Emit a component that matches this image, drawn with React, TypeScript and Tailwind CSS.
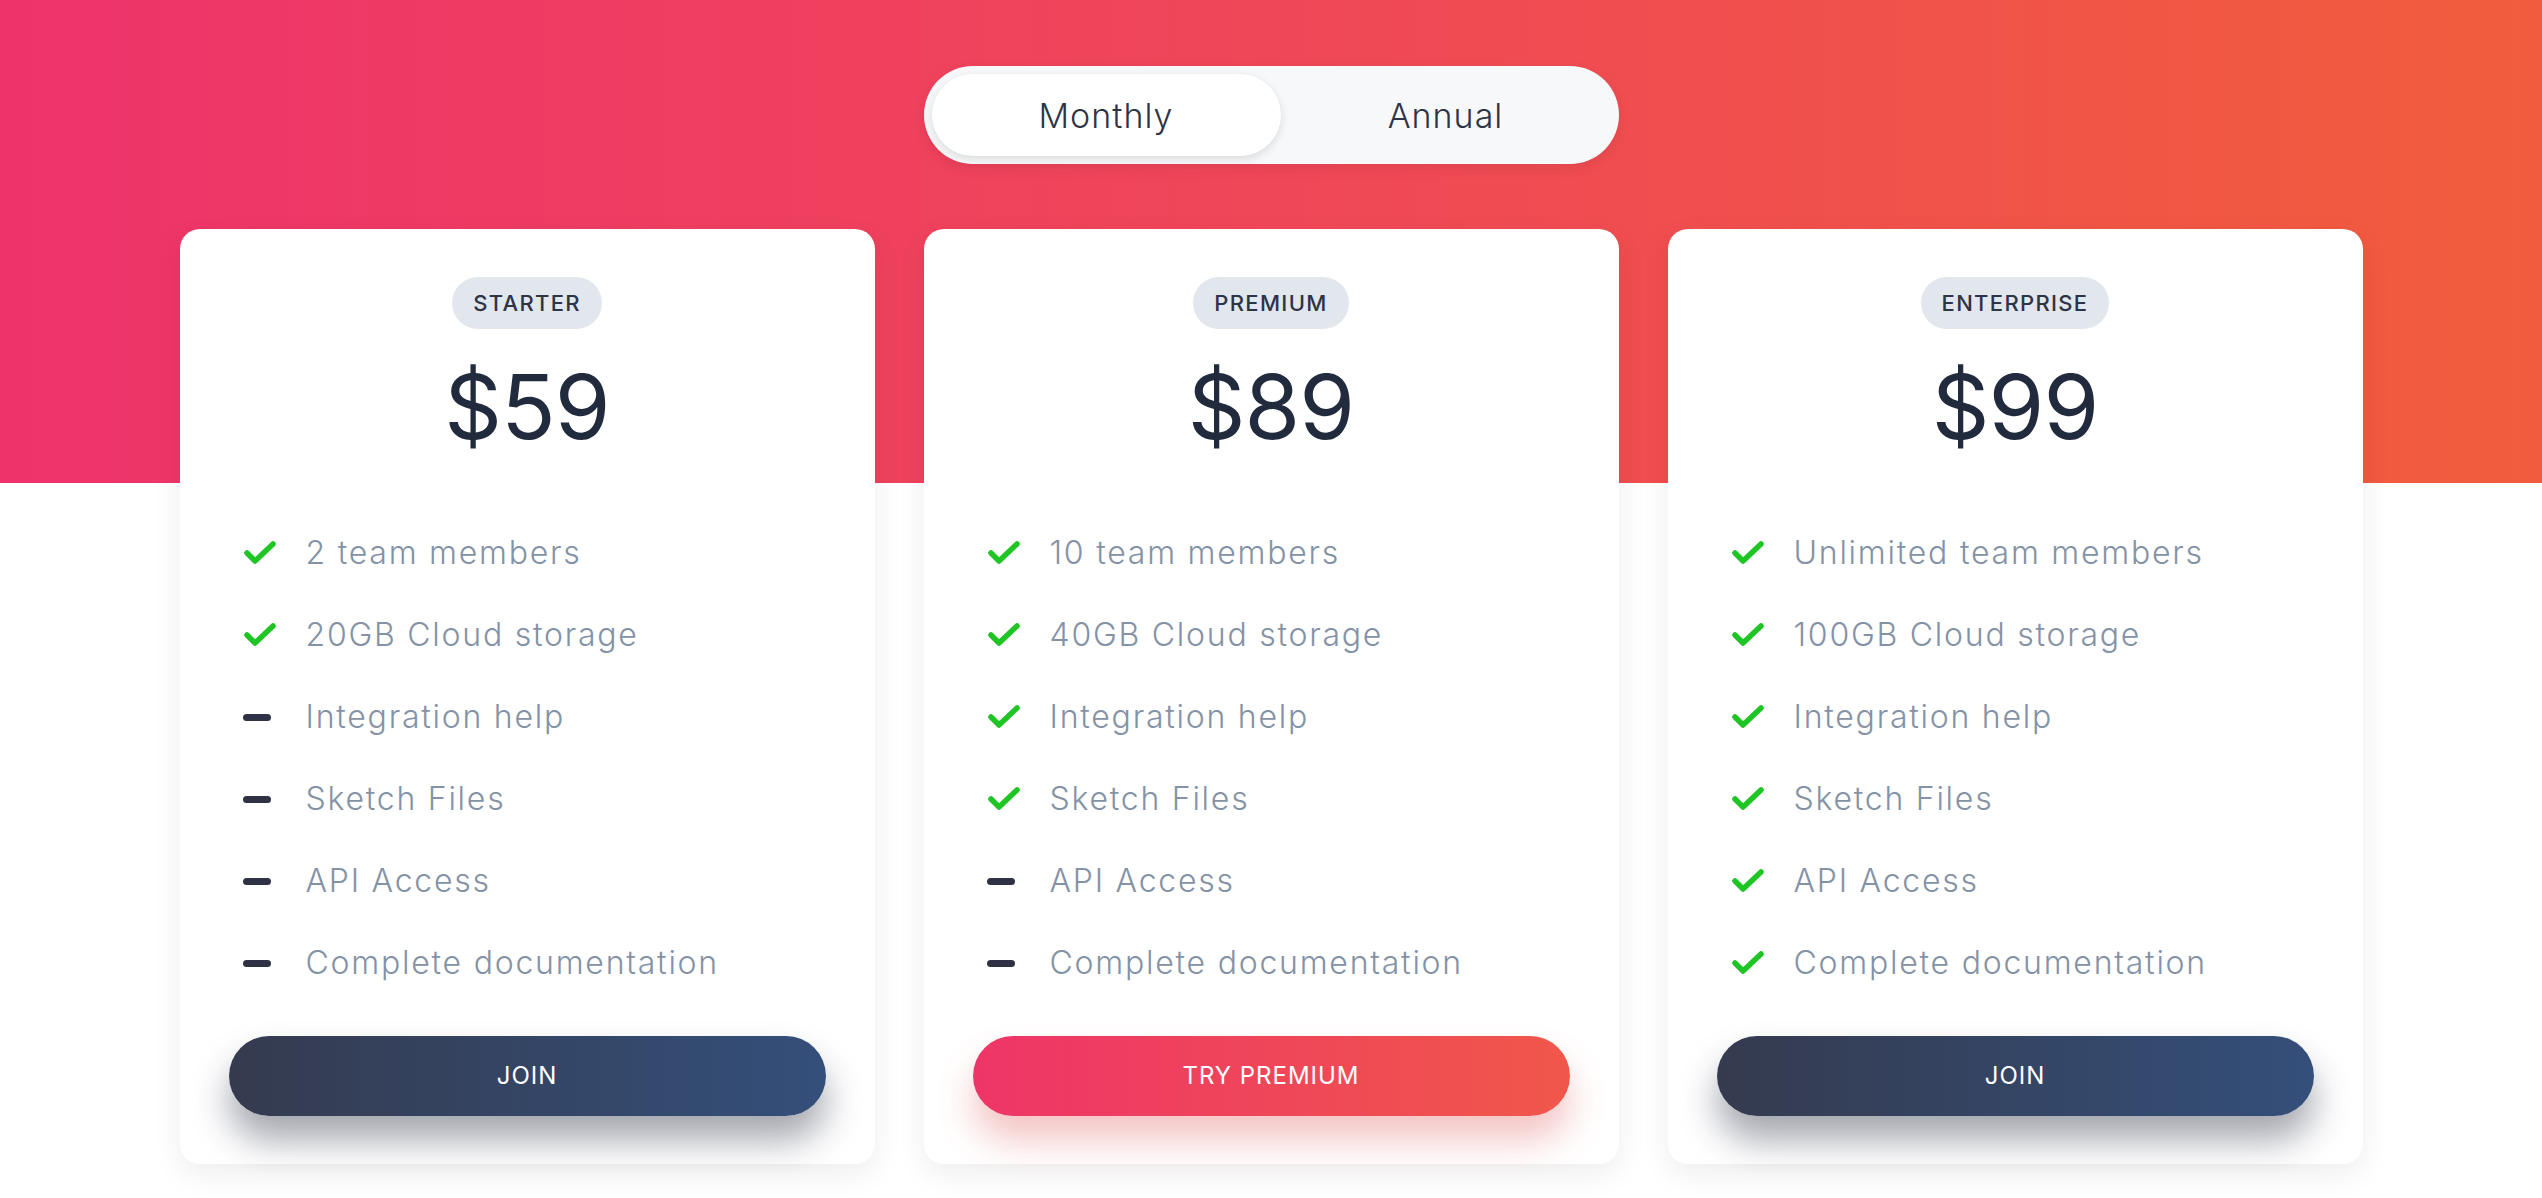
const plans = [
  {
    name: "STARTER",
    price: "$59",
    cta: "JOIN",
    premium: false,
    features: [
      ["2 team members", true],
      ["20GB Cloud storage", true],
      ["Integration help", false],
      ["Sketch Files", false],
      ["API Access", false],
      ["Complete documentation", false],
    ] as [string, boolean][],
  },
  {
    name: "PREMIUM",
    price: "$89",
    cta: "TRY PREMIUM",
    premium: true,
    features: [
      ["10 team members", true],
      ["40GB Cloud storage", true],
      ["Integration help", true],
      ["Sketch Files", true],
      ["API Access", false],
      ["Complete documentation", false],
    ] as [string, boolean][],
  },
  {
    name: "ENTERPRISE",
    price: "$99",
    cta: "JOIN",
    premium: false,
    features: [
      ["Unlimited team members", true],
      ["100GB Cloud storage", true],
      ["Integration help", true],
      ["Sketch Files", true],
      ["API Access", true],
      ["Complete documentation", true],
    ] as [string, boolean][],
  },
];

function Check() {
  return (
    <svg width="34" height="26" viewBox="0 0 34 26" fill="none">
      <polyline
        points="4,13 12,21 30,4"
        stroke="#1fc524"
        strokeWidth="5.5"
        strokeLinecap="round"
        strokeLinejoin="round"
      />
    </svg>
  );
}

function Dash() {
  return <span className="block h-[7px] w-[28px] rounded-full bg-[#2e3244]" />;
}

export default function App() {
  return (
    <div
      className="min-h-[1198px] w-full bg-white bg-[linear-gradient(90deg,#ee336b,#f04758_50%,#f15d3c)] bg-no-repeat bg-[length:100%_483px] pt-[66px]"
      style={{ fontFamily: "Inter, 'Open Sans', sans-serif" }}
    >
      {/* Billing toggle */}
      <div className="mx-auto flex h-[98px] w-[695px] items-center rounded-full bg-[#f7f8fa] p-[8px] shadow-[0_4px_14px_rgba(0,0,0,0.08)]">
        <button className="flex h-full w-[349px] items-center justify-center rounded-full bg-white text-[34px] font-light tracking-[0.03em] text-[#2d3446] shadow-[0_3px_10px_rgba(0,0,0,0.12)]">
          Monthly
        </button>
        <button className="flex h-full flex-1 items-center justify-center text-[34px] font-light tracking-[0.03em] text-[#2d3446]">
          Annual
        </button>
      </div>

      {/* Plans */}
      <div className="mx-auto mt-[65px] grid w-[2183px] grid-cols-3 gap-[49px]">
        {plans.map((p) => (
          <div
            key={p.name}
            className="flex flex-col items-center rounded-[20px] bg-white px-[49px] pb-[48px] pt-[48px] shadow-[0_10px_30px_rgba(0,0,0,0.07)]"
          >
            <span className="flex h-[52px] items-center rounded-full bg-[#e2e6ed] px-[21px] text-[22px] font-medium tracking-[0.06em] text-[#2d3446]">
              {p.name}
            </span>
            <div className="mt-[33px] text-[90px] font-normal leading-none tracking-[-0.01em] text-[#222b3e]">
              {p.price}
            </div>

            <ul className="mt-[60px] w-full">
              {p.features.map(([label, ok]) => (
                <li key={label} className="flex h-[82px] items-center pl-[14px]">
                  <span className="flex w-[63px] items-center">{ok ? <Check /> : <Dash />}</span>
                  <span className="text-[32px] font-light tracking-[0.055em] text-[#8492a6]">{label}</span>
                </li>
              ))}
            </ul>

            <button
              className={
                p.premium
                  ? "mt-[32px] h-[80px] w-full rounded-full bg-[linear-gradient(90deg,#ee3568,#f0574a)] text-[24px] tracking-[0.04em] text-white shadow-[0_24px_36px_rgba(220,70,70,0.32)]"
                  : "mt-[32px] h-[80px] w-full rounded-full bg-[linear-gradient(90deg,#353b4f,#344f7a)] text-[24px] tracking-[0.04em] text-white shadow-[0_24px_36px_rgba(30,35,55,0.4)]"
              }
            >
              {p.cta}
            </button>
          </div>
        ))}
      </div>
    </div>
  );
}
